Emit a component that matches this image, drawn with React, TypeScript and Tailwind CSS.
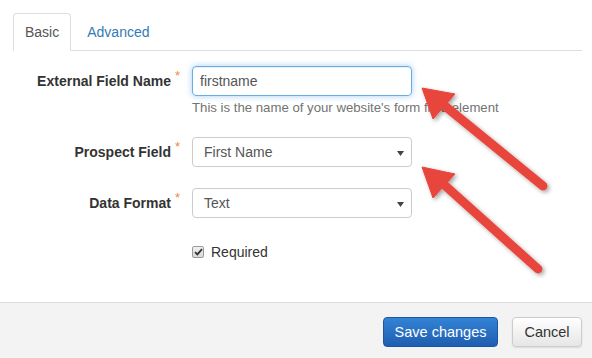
import React from "react";

function Caret() {
  return (
    <svg width="7" height="5" viewBox="0 0 7 5" className="absolute right-[7px] top-[13px]">
      <polygon points="0,0 7,0 3.5,5" fill="#444" />
    </svg>
  );
}

function Req() {
  return <span className="relative -top-[6px] ml-[4px] text-[13px] font-normal text-[#ee8a3c]">*</span>;
}

export default function App() {
  return (
    <div className="relative w-[592px] h-[358px] overflow-hidden bg-white font-['Liberation_Sans',Arial,sans-serif] text-[14px] text-[#333] flex flex-col">
      <div className="pt-[13px] pl-[13px] pr-[10px]">
        <ul className="flex border-b border-[#ddd]">
          <li className="-mb-px border border-[#ddd] border-b-white rounded-t-[4px] px-[11px] py-[8px] leading-[20px] text-[#555] bg-white">
            Basic
          </li>
          <li className="-mb-px ml-[2px] border border-transparent px-[13px] py-[8px] leading-[20px] text-[#337ab7]">
            Advanced
          </li>
        </ul>
      </div>

      <div className="mt-[15px] flex flex-col">
        <div className="flex items-start">
          <div className="w-[180px] text-right font-bold leading-[30px] whitespace-nowrap">
            External Field Name<Req />
          </div>
          <div className="ml-[12px] flex flex-col">
            <div className="w-[220px] h-[30px] rounded-[4px] border border-[#66afe9] shadow-[inset_0_1px_1px_rgba(0,0,0,0.075),0_0_6px_rgba(102,175,233,0.6)] pl-[7px] leading-[28px] text-[#555]">
              firstname
            </div>
            <div className="mt-[2px] leading-[20px] text-[13.2px] text-[#737373] whitespace-nowrap">
              This is the name of your website's form field element
            </div>
          </div>
        </div>

        <div className="mt-[19px] flex items-start">
          <div className="w-[180px] text-right font-bold leading-[30px]">
            Prospect Field<Req />
          </div>
          <div className="relative ml-[12px] w-[220px] h-[30px] rounded-[4px] border border-[#ccc] pl-[11px] leading-[28px] text-[#555]">
            First Name
            <Caret />
          </div>
        </div>

        <div className="mt-[20px] flex items-start">
          <div className="w-[180px] text-right font-bold leading-[30px]">
            Data Format<Req />
          </div>
          <div className="relative ml-[12px] w-[220px] h-[30px] rounded-[4px] border border-[#ccc] pl-[11px] leading-[28px] text-[#555]">
            Text
            <Caret />
          </div>
        </div>

        <div className="mt-[23px] flex items-center h-[20px] pl-[192px]">
          <div className="w-[12px] h-[12px] rounded-[2px] border border-[#9a9a9a] bg-gradient-to-b from-[#f0f0f0] to-[#d8d8d8] flex items-center justify-center">
            <svg width="9" height="8" viewBox="0 0 9 8">
              <path d="M1 4.2 L3.4 6.4 L8 1.2" fill="none" stroke="#333" strokeWidth="1.8" />
            </svg>
          </div>
          <span className="ml-[7px] leading-[20px] text-[#333]">Required</span>
        </div>
      </div>

      <div className="mt-auto h-[56px] border-t border-[#dcdcdc] bg-[#f3f3f3] flex justify-end items-start pt-[14px] pr-[10px]">
        <div className="w-[115px] h-[30px] rounded-[4px] border border-[#1d55a0] bg-gradient-to-b from-[#3383d6] to-[#1f5eb0] text-white leading-[28px] text-center text-[14.5px]">
          Save changes
        </div>
        <div className="ml-[14px] w-[70px] h-[30px] rounded-[4px] border border-[#ccc] bg-gradient-to-b from-white to-[#e6e6e6] shadow-[0_1px_2px_rgba(0,0,0,0.1)] text-[#333] leading-[28px] text-center text-[14.5px]">
          Cancel
        </div>
      </div>

      <svg className="absolute left-0 top-0 pointer-events-none" width="592" height="358" viewBox="0 0 592 358">
        <defs>
          <filter id="sh" x="-20%" y="-20%" width="140%" height="140%">
            <feDropShadow dx="2" dy="2" stdDeviation="2" floodColor="#000" floodOpacity="0.35" />
          </filter>
        </defs>
        <g filter="url(#sh)" fill="#e8453c" stroke="#e8453c">
          <line x1="543" y1="186" x2="440" y2="102" strokeWidth="9" strokeLinecap="round" />
          <polygon points="422,88 455,94 433,119" strokeWidth="1" strokeLinejoin="round" />
        </g>
        <g filter="url(#sh)" fill="#e8453c" stroke="#e8453c">
          <line x1="538" y1="269" x2="440" y2="181" strokeWidth="9" strokeLinecap="round" />
          <polygon points="422,167 455,174 433,198" strokeWidth="1" strokeLinejoin="round" />
        </g>
      </svg>
    </div>
  );
}
